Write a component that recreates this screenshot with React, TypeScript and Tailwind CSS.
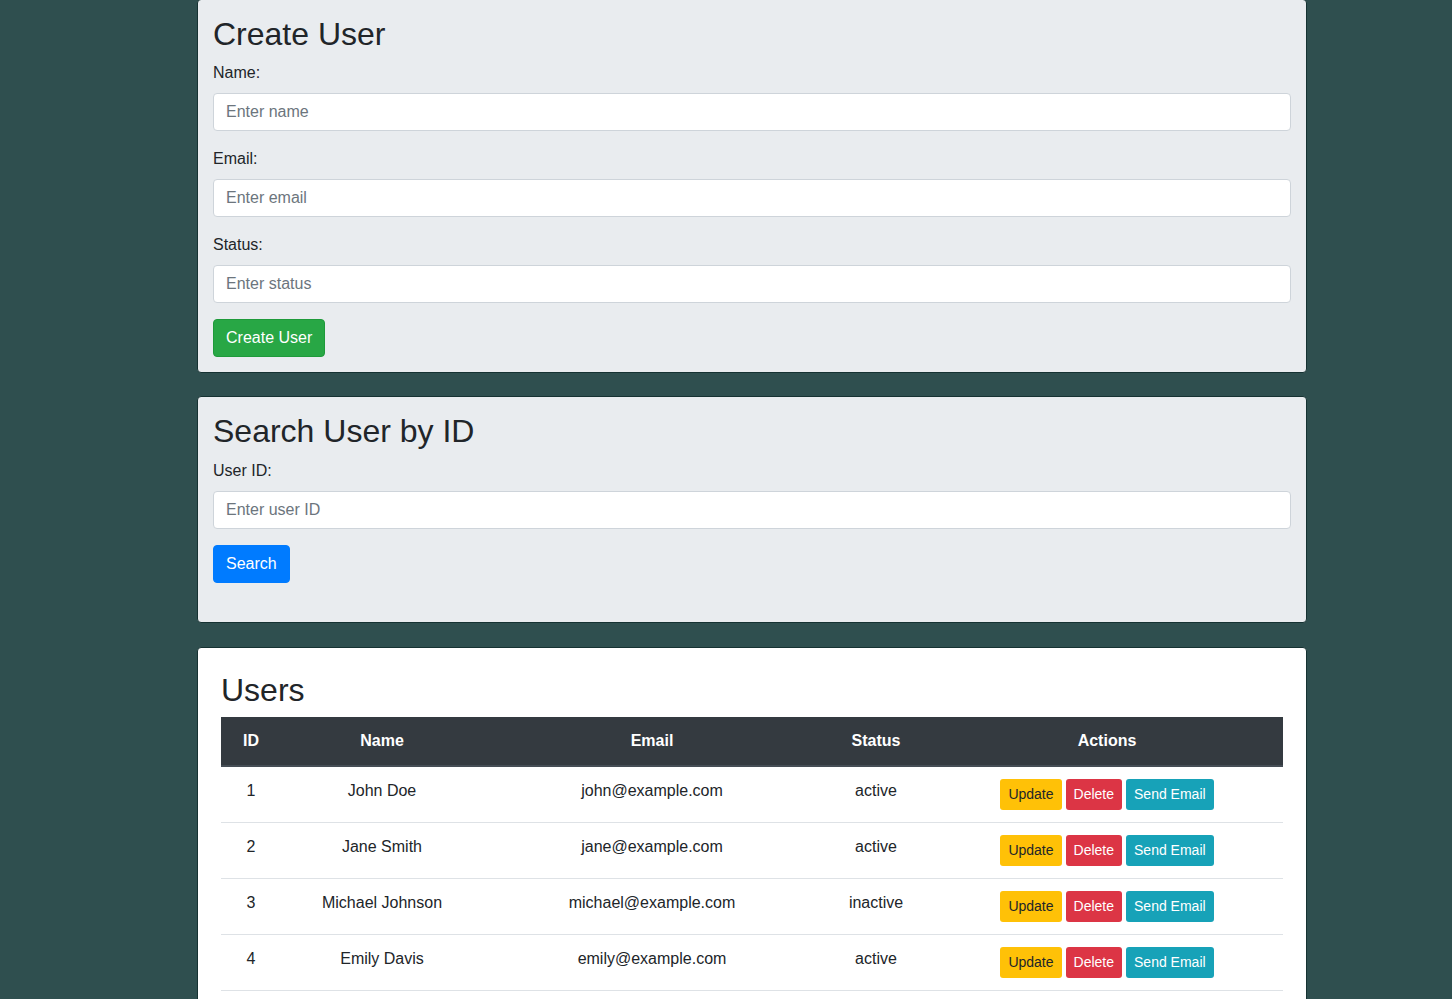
import React from "react";

const users = [
  { id: 1, name: "John Doe", email: "john@example.com", status: "active" },
  { id: 2, name: "Jane Smith", email: "jane@example.com", status: "active" },
  { id: 3, name: "Michael Johnson", email: "michael@example.com", status: "inactive" },
  { id: 4, name: "Emily Davis", email: "emily@example.com", status: "active" },
];

function Field({ label, placeholder }: { label: string; placeholder: string }) {
  return (
    <div className="mb-4">
      <label className="block mb-2 text-[16px] leading-6">{label}</label>
      <input
        placeholder={placeholder}
        className="block w-full h-[38px] px-3 py-[6px] text-[16px] leading-6 bg-white border border-[#ced4da] rounded-[4px] text-[#495057] placeholder:text-[#6c757d] outline-none"
      />
    </div>
  );
}

export default function App() {
  return (
    <div className="min-h-screen bg-[#2f4f4f] pl-[197px] pb-10 text-[#212529] font-['Liberation_Sans',Arial,sans-serif]">
      <div className="w-[1110px] flex flex-col gap-[23px]">
        <div className="-mt-px bg-[#e9ecef] border border-[#163232] rounded-[4px] p-[15px]">
          <h2 className="text-[32px] leading-[38.4px] mb-2">Create User</h2>
          <Field label="Name:" placeholder="Enter name" />
          <Field label="Email:" placeholder="Enter email" />
          <Field label="Status:" placeholder="Enter status" />
          <button className="h-[38px] px-3 text-[16px] leading-6 text-white bg-[#28a745] border border-[#1e9a3a] rounded-[4px]">
            Create User
          </button>
        </div>

        <div className="bg-[#e9ecef] border border-[#163232] rounded-[4px] px-[15px] pt-[15px] pb-[39px]">
          <h2 className="text-[32px] leading-[38.4px] mb-2">Search User by ID</h2>
          <Field label="User ID:" placeholder="Enter user ID" />
          <button className="h-[38px] px-3 text-[16px] leading-6 text-white bg-[#007bff] border border-[#007bff] rounded-[4px]">
            Search
          </button>
        </div>

        <div className="bg-white border border-[#163232] rounded-[4px] p-[23px] mt-px">
          <h2 className="text-[32px] leading-[38.4px] mb-2">Users</h2>
          <table className="w-full border-collapse text-[16px] leading-6">
            <thead>
              <tr className="bg-[#343a40] text-white">
                <th className="w-[60px] p-3 font-bold text-center border-b-2 border-[#454d55]">ID</th>
                <th className="w-[202px] p-3 font-bold text-center border-b-2 border-[#454d55]">Name</th>
                <th className="w-[338px] p-3 font-bold text-center border-b-2 border-[#454d55]">Email</th>
                <th className="w-[110px] p-3 font-bold text-center border-b-2 border-[#454d55]">Status</th>
                <th className="p-3 font-bold text-center border-b-2 border-[#454d55]">Actions</th>
              </tr>
            </thead>
            <tbody>
              {users.map((u) => (
                <tr key={u.id} className="border-b border-[#dee2e6]">
                  <td className="p-3 text-center align-top">{u.id}</td>
                  <td className="p-3 text-center align-top">{u.name}</td>
                  <td className="p-3 text-center align-top">{u.email}</td>
                  <td className="p-3 text-center align-top">{u.status}</td>
                  <td className="p-3 text-center align-top">
                    <div className="flex justify-center gap-1">
                      <button className="h-[31px] px-2 text-[14px] leading-[21px] bg-[#ffc107] text-[#212529] rounded-[3px]">Update</button>
                      <button className="h-[31px] px-2 text-[14px] leading-[21px] bg-[#dc3545] text-white rounded-[3px]">Delete</button>
                      <button className="h-[31px] px-2 text-[14px] leading-[21px] bg-[#17a2b8] text-white rounded-[3px]">Send Email</button>
                    </div>
                  </td>
                </tr>
              ))}
            </tbody>
          </table>
        </div>
      </div>
    </div>
  );
}
